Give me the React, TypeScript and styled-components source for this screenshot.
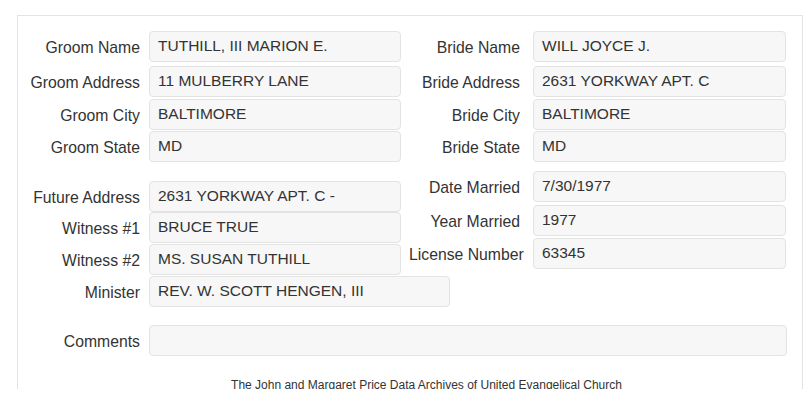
import { createGlobalStyle, styled } from "styled-components";

const GlobalStyle = createGlobalStyle`
  html, body {
    margin: 0;
    padding: 0;
    background: #fff;
    font-family: Arial, "Liberation Sans", sans-serif;
    color: #333;
  }
`;

interface Field {
  label: string;
  value: string;
  width?: number;
}

const groom: Field[] = [
  { label: "Groom Name", value: "TUTHILL, III MARION E." },
  { label: "Groom Address", value: "11 MULBERRY LANE" },
  { label: "Groom City", value: "BALTIMORE" },
  { label: "Groom State", value: "MD" },
];

const bride: Field[] = [
  { label: "Bride Name", value: "WILL JOYCE J." },
  { label: "Bride Address", value: "2631 YORKWAY APT. C" },
  { label: "Bride City", value: "BALTIMORE" },
  { label: "Bride State", value: "MD" },
];

const other: Field[] = [
  { label: "Future Address", value: "2631 YORKWAY APT. C -" },
  { label: "Witness #1", value: "BRUCE TRUE" },
  { label: "Witness #2", value: "MS. SUSAN TUTHILL" },
  { label: "Minister", value: "REV. W. SCOTT HENGEN, III", width: 301 },
];

const marriage: Field[] = [
  { label: "Date Married", value: "7/30/1977" },
  { label: "Year Married", value: "1977" },
  { label: "License Number", value: "63345" },
];

function Fields({ items }: { items: Field[] }) {
  return (
    <>
      {items.map((f) => (
        <Row key={f.label}>
          <Label>{f.label}</Label>
          <Value $width={f.width}>{f.value}</Value>
        </Row>
      ))}
    </>
  );
}

export default function App() {
  return (
    <>
      <GlobalStyle />
      <Panel>
        <Section>
          <Column $side="left" $rows="35px 33px 32px 31px">
            <Fields items={groom} />
          </Column>
          <Column $side="right" $rows="35px 33px 32px 31px">
            <Fields items={bride} />
          </Column>
        </Section>

        <Section $top={9}>
          <Column $side="left" $offset={10} $rows="31px 32px 32px 31px">
            <Fields items={other} />
          </Column>
          <Column $side="right" $rows="34px 33px 31px">
            <Fields items={marriage} />
          </Column>
        </Section>

        <Comments>
          <Label>Comments</Label>
          <Value />
        </Comments>

        <Footer>
          The John and Margaret Price Data Archives of United Evangelical Church
        </Footer>
      </Panel>
    </>
  );
}

const Panel = styled.div`
  margin: 15px 2px 0 17px;
  border: 1px solid #e3e3e3;
  border-bottom: 0;
  padding: 15px 0 18px 0;
  height: 374px;
  box-sizing: border-box;
`;

const Section = styled.div<{ $top?: number }>`
  display: flex;
  margin-top: ${(p) => p.$top ?? 0}px;
`;

const Column = styled.div<{ $side: "left" | "right"; $offset?: number; $rows: string }>`
  display: grid;
  grid-template-rows: ${(p) => p.$rows};
  align-content: start;
  padding-top: ${(p) => p.$offset ?? 0}px;
  width: ${(p) => (p.$side === "left" ? 382 : 385)}px;
  padding-left: 9px;
  box-sizing: border-box;
  --label-w: ${(p) => (p.$side === "left" ? 113 : 111)}px;
  --gap: ${(p) => (p.$side === "left" ? 9 : 13)}px;
  --value-w: ${(p) => (p.$side === "left" ? 252 : 253)}px;
`;

const Row = styled.div`
  display: grid;
  grid-template-columns: var(--label-w) var(--value-w);
  column-gap: var(--gap);
  align-items: center;
  align-self: start;
  height: 31px;
`;

const Label = styled.div`
  text-align: right;
  font-size: 15.75px;
  white-space: nowrap;
  padding-top: 3px;
  color: #333;
`;

const Value = styled.div<{ $width?: number }>`
  box-sizing: border-box;
  height: 31px;
  width: ${(p) => (p.$width ? `${p.$width}px` : "100%")};
  background: #f7f7f7;
  border: 1px solid #e3e3e3;
  border-radius: 4px;
  padding: 0 8px 1px 8px;
  display: flex;
  align-items: center;
  font-size: 15.5px;
  color: #333;
  white-space: nowrap;
`;

const Comments = styled.div`
  display: grid;
  grid-template-columns: 113px 638px;
  column-gap: 9px;
  align-items: center;
  padding-left: 9px;
  height: 31px;
  margin-top: 18px;
`;

const Footer = styled.div`
  margin-top: 22px;
  padding-left: 33px;
  text-align: center;
  font-size: 12px;
  color: #333;
`;
